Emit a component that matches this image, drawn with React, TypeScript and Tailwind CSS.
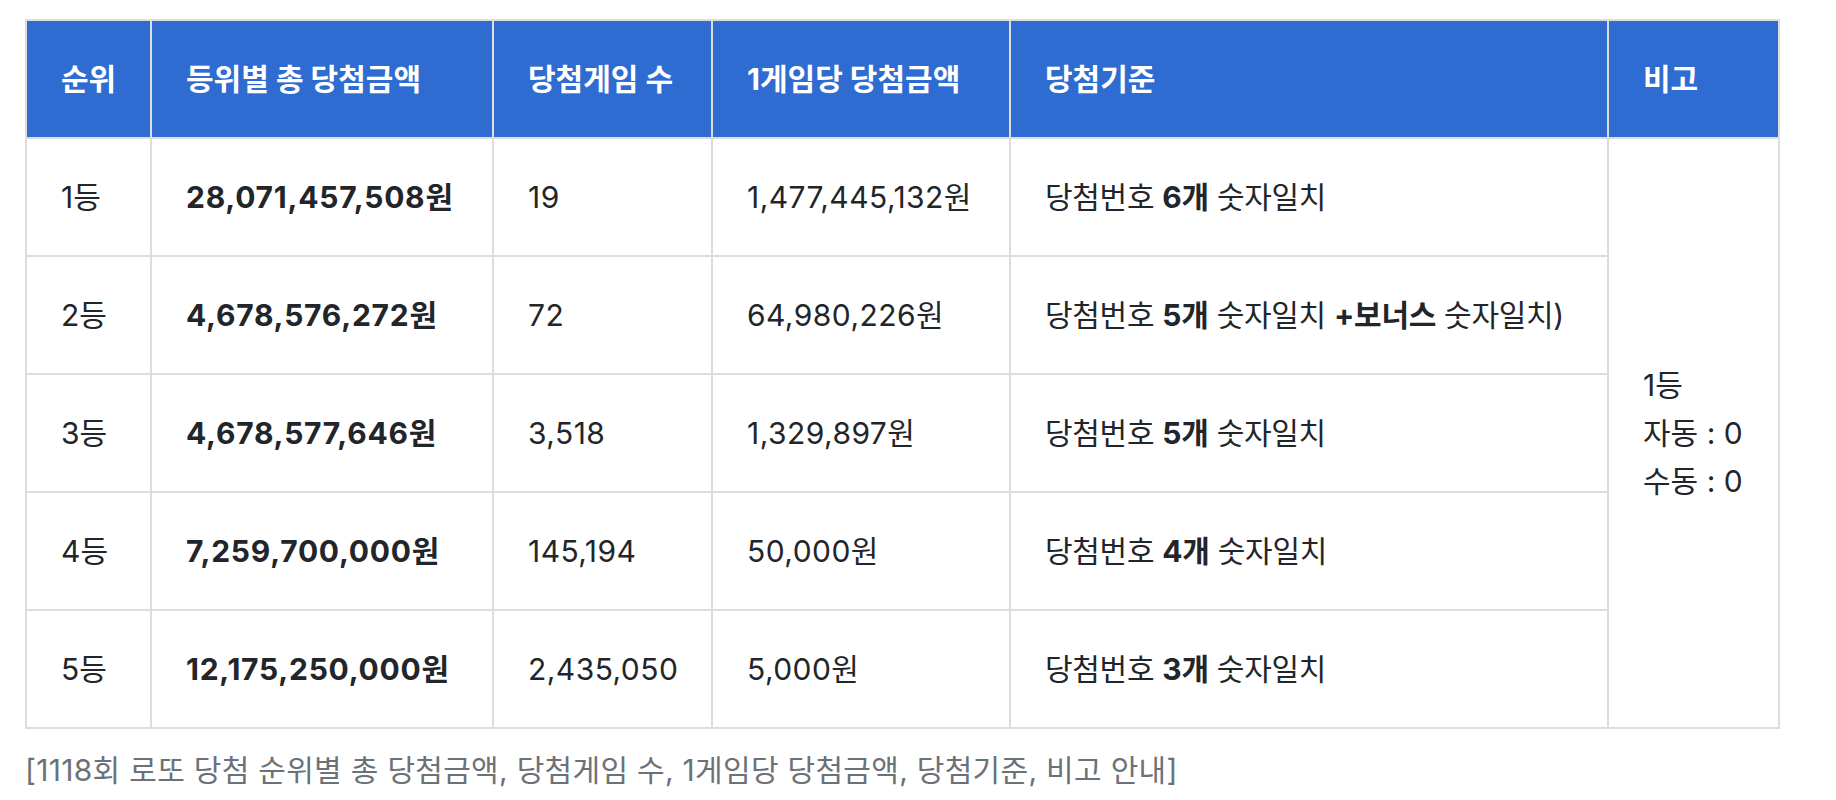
const rows = [
  { rank: '1등', total: '28,071,457,508원', games: '19', per: '1,477,445,132원', n: '6개', bonus: false },
  { rank: '2등', total: '4,678,576,272원', games: '72', per: '64,980,226원', n: '5개', bonus: true },
  { rank: '3등', total: '4,678,577,646원', games: '3,518', per: '1,329,897원', n: '5개', bonus: false },
  { rank: '4등', total: '7,259,700,000원', games: '145,194', per: '50,000원', n: '4개', bonus: false },
  { rank: '5등', total: '12,175,250,000원', games: '2,435,050', per: '5,000원', n: '3개', bonus: false },
]

const headers = ['순위', '등위별 총 당첨금액', '당첨게임 수', '1게임당 당첨금액', '당첨기준', '비고']

export default function App() {
  return (
    <div className="min-h-screen bg-white pl-[25px] pt-[19px] font-['Inter','Noto_Sans_CJK_KR',sans-serif] text-[#222529]">
      <table className="w-[1753px] table-fixed border-collapse whitespace-nowrap text-[30px] leading-[48px]">
        <colgroup>
          <col className="w-[125px]" />
          <col className="w-[342px]" />
          <col className="w-[219px]" />
          <col className="w-[298px]" />
          <col className="w-[598px]" />
          <col className="w-[171px]" />
        </colgroup>
        <thead>
          <tr className="h-[118px] bg-[#2e6cd1]">
            {headers.map(h => (
              <th key={h} className="border-2 border-[#dddddd] px-[34px] text-left font-bold text-white">
                {h}
              </th>
            ))}
          </tr>
        </thead>
        <tbody>
          {rows.map((r, i) => (
            <tr key={r.rank} className="h-[118px]">
              <td className="border-2 border-[#dddddd] px-[34px]">{r.rank}</td>
              <td className="border-2 border-[#dddddd] px-[34px] font-bold tracking-[0.025em]">{r.total}</td>
              <td className="border-2 border-[#dddddd] px-[34px] tracking-[0.015em]">{r.games}</td>
              <td className="border-2 border-[#dddddd] px-[34px] tracking-[0.015em]">{r.per}</td>
              <td className="border-2 border-[#dddddd] px-[34px] tracking-[-0.01em]">
                당첨번호 <b className="font-bold">{r.n}</b> 숫자일치
                {r.bonus && (
                  <>
                    {' '}
                    <b className="font-bold">+보너스</b> 숫자일치)
                  </>
                )}
              </td>
              {i === 0 && (
                <td rowSpan={5} className="border-2 border-[#dddddd] px-[34px] align-middle">
                  <div>1등</div>
                  <div>자동 : 0</div>
                  <div>수동 : 0</div>
                </td>
              )}
            </tr>
          ))}
        </tbody>
      </table>
      <p className="mt-[19px] text-[30px] leading-[45px] tracking-[0.01em] text-[#6c7178]">
        [1118회 로또 당첨 순위별 총 당첨금액, 당첨게임 수, 1게임당 당첨금액, 당첨기준, 비고 안내]
      </p>
    </div>
  )
}
